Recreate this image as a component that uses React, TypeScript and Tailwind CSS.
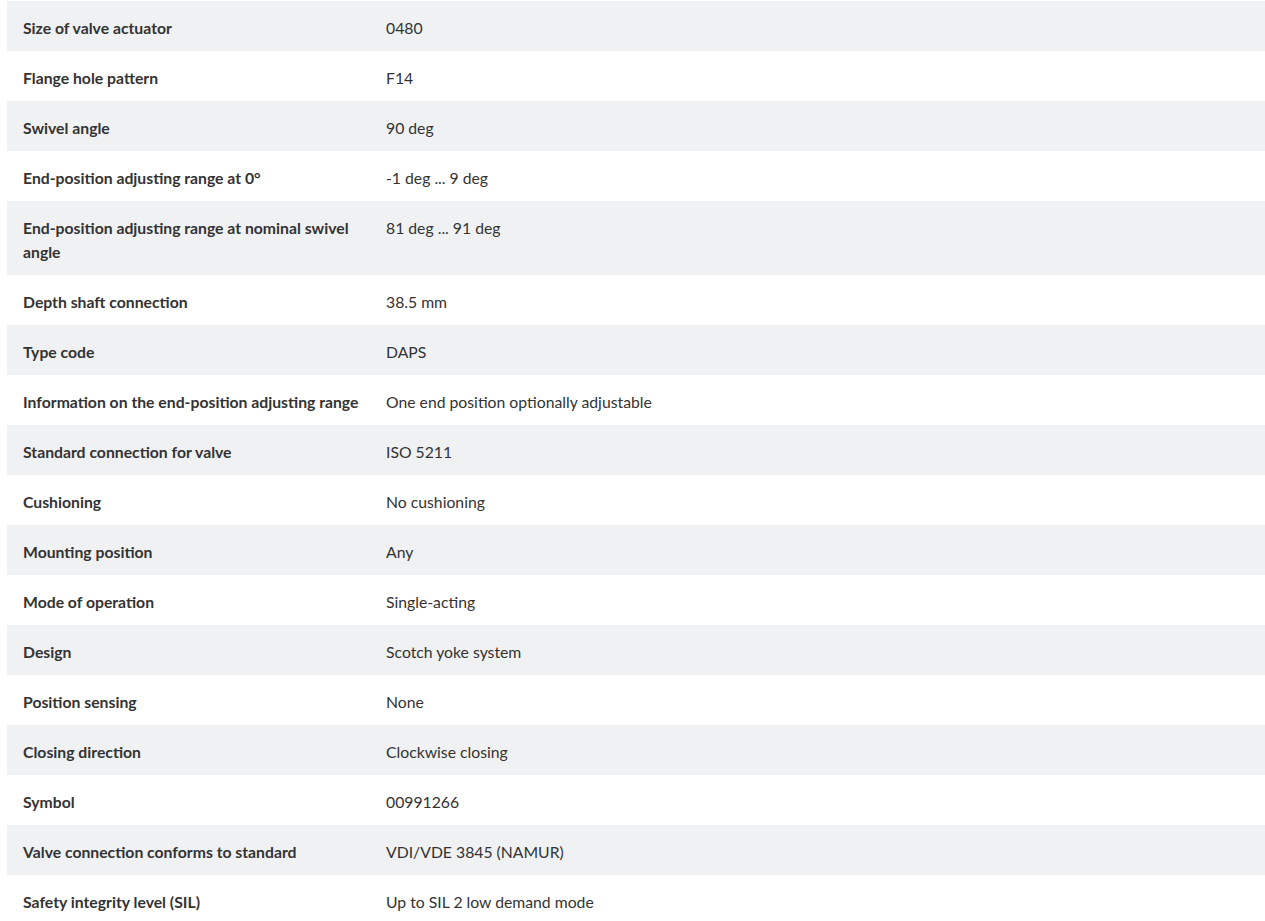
const ROWS: [string, string][] = [
  ["Size of valve actuator", "0480"],
  ["Flange hole pattern", "F14"],
  ["Swivel angle", "90 deg"],
  ["End-position adjusting range at 0°", "-1 deg ... 9 deg"],
  ["End-position adjusting range at nominal swivel angle", "81 deg ... 91 deg"],
  ["Depth shaft connection", "38.5 mm"],
  ["Type code", "DAPS"],
  ["Information on the end-position adjusting range", "One end position optionally adjustable"],
  ["Standard connection for valve", "ISO 5211"],
  ["Cushioning", "No cushioning"],
  ["Mounting position", "Any"],
  ["Mode of operation", "Single-acting"],
  ["Design", "Scotch yoke system"],
  ["Position sensing", "None"],
  ["Closing direction", "Clockwise closing"],
  ["Symbol", "00991266"],
  ["Valve connection conforms to standard", "VDI/VDE 3845 (NAMUR)"],
  ["Safety integrity level (SIL)", "Up to SIL 2 low demand mode"],
];

export default function App() {
  return (
    <div className="min-h-screen bg-white pt-px pl-[7px] font-['Lato',sans-serif] text-[15.75px] leading-[24px] text-[#333333]">
      {ROWS.map(([label, value], i) => (
        <div
          key={label}
          className={`flex ${i % 2 === 0 ? "bg-[#f0f1f3]" : "bg-white"}`}
        >
          <div className="w-[363px] shrink-0 pl-4 pr-2 pt-[15px] pb-[11px] font-bold">{label}</div>
          <div className="flex-1 pl-4 pr-4 pt-[15px] pb-[11px]">{value}</div>
        </div>
      ))}
    </div>
  );
}
